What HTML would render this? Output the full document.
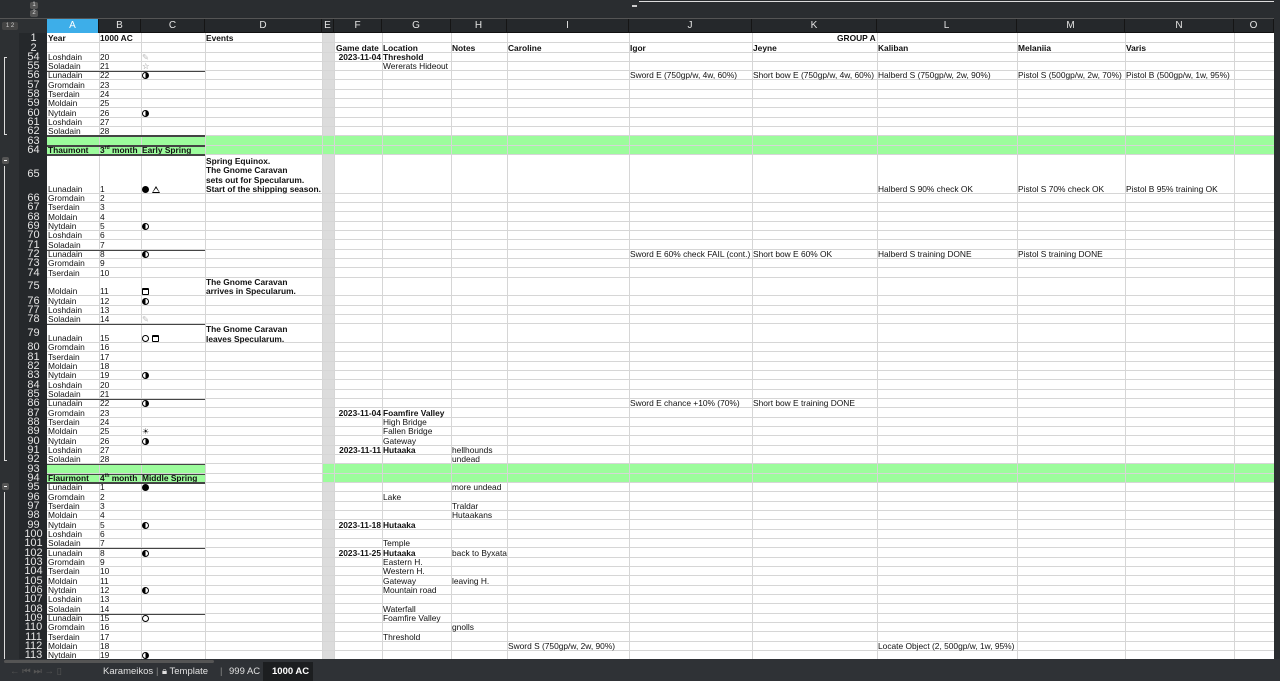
<!DOCTYPE html>
<html><head><meta charset="utf-8"><style>
*{margin:0;padding:0;box-sizing:border-box}
body{width:1280px;height:681px;overflow:hidden;background:#2b2e31;font-family:"Liberation Sans","DejaVu Sans",sans-serif;position:relative}
#top{position:absolute;left:0;top:0;width:1280px;height:19px;background:#2a2d30;border-bottom:1px solid #555}
#ch{position:absolute;left:47px;top:19px;width:1227px;height:14px;background:#25282b;border-bottom:1px solid #111}
#ch div{position:absolute;top:0;height:14px;color:#e4e4e4;font-size:10px;line-height:14px;text-align:center;border-right:1px solid #151515}
#sheet{position:absolute;left:47px;top:33px;width:1227px;height:626px;background:#fff;overflow:hidden}
#E{position:absolute;left:275px;top:0;width:12px;height:626px;background:#dcdcdc}
#rows{position:absolute;left:0;top:33px;width:1274px}
.r{position:relative;height:9.33px}
.r::after{content:"";position:absolute;left:47px;right:0;bottom:0;height:1px;background:#d6d6d6}
.r .n{position:absolute;left:20px;width:27px;bottom:-1px;text-align:center;color:#e6e6e6;font-size:11px;line-height:11px;z-index:3;font-weight:normal}
.r span{position:absolute;bottom:0;font-size:8.4px;line-height:9px;white-space:nowrap;color:#111;z-index:2}
.b{font-weight:bold}
.g{background:linear-gradient(#9cfc9c,#9cfc9c) no-repeat 47px 0/1227px 100%}
.g2{background:linear-gradient(#9cfc9c,#9cfc9c) no-repeat 47px 0/158px 100%,linear-gradient(#9cfc9c,#9cfc9c) no-repeat 322px 0/952px 100%}
.A{left:48px}.B{left:100px}.C{left:142px}.D{left:206px}.F{left:334px;width:47px;text-align:right;font-weight:bold}.G{left:383px}.H{left:452px}.I{left:508px}.J{left:630px}.K{left:753px}.L{left:878px}.M{left:1018px}.N{left:1126px}
.tl{position:absolute;bottom:-1px;height:2px;background:#444;z-index:2}
.vl{position:absolute;top:33px;width:1px;height:626px;background:#d6d6d6;z-index:1}
#left{position:absolute;left:0;top:19px;width:47px;height:640px;background:#2d3033}
#rh{position:absolute;left:19px;top:33px;width:28px;height:626px;background:#25282b}
#tabs{position:absolute;left:0;top:659px;width:1280px;height:22px;background:#2f3236;color:#e0e0e0;font-size:9.5px}
#tabs span{position:absolute;top:7px}
i.m{display:inline-block;width:7px;height:7px;border-radius:50%;border:1px solid #000;vertical-align:-1px;margin-right:3px}
.fr{background:linear-gradient(to right,#fff 50%,#000 50%)}
.fl{background:linear-gradient(to right,#000 50%,#fff 50%)}
.ff{background:#000}
.fo{background:#fff}
i.cal{display:inline-block;width:7px;height:7px;border:1px solid #000;border-top-width:2px;border-radius:1px;vertical-align:-1px}
i.tri{display:inline-block;width:0;height:0;border-left:4px solid transparent;border-right:4px solid transparent;border-bottom:7px solid #000;position:relative;vertical-align:-1px}
i.tri::after{content:"";position:absolute;left:-3px;top:2px;border-left:3px solid transparent;border-right:3px solid transparent;border-bottom:4px solid #fff}
</style></head><body>
<div id="top">
<div style="position:absolute;left:30px;top:2px;width:8px;height:7px;border-radius:2px;background:#555;color:#ddd;font-size:6px;text-align:center;line-height:7px">1</div>
<div style="position:absolute;left:30px;top:10px;width:8px;height:7px;border-radius:2px;background:#555;color:#ddd;font-size:6px;text-align:center;line-height:7px">2</div>
<div style="position:absolute;left:632px;top:5px;width:5px;height:2px;background:#ccc"></div>
<div style="position:absolute;left:639px;top:1px;width:641px;height:1px;background:#ddd"></div>
</div>
<div id="left"></div>
<div style="position:absolute;left:2px;top:22px;width:16px;height:8px;background:#444;border-radius:2px;color:#ccc;font-size:6px;text-align:center;line-height:8px">1 2</div>
<div style="position:absolute;left:4px;top:57px;width:3px;height:78px;border:1px solid #ddd;border-right:none"></div>
<div style="position:absolute;left:2px;top:157px;width:7px;height:7px;background:#555;border-radius:2px"></div>
<div style="position:absolute;left:4px;top:160px;width:3px;height:1px;background:#fff"></div>
<div style="position:absolute;left:4px;top:166px;width:3px;height:295px;border-left:1px solid #ddd;border-bottom:1px solid #ddd"></div>
<div style="position:absolute;left:2px;top:483px;width:7px;height:7px;background:#555;border-radius:2px"></div>
<div style="position:absolute;left:4px;top:486px;width:3px;height:1px;background:#fff"></div>
<div style="position:absolute;left:4px;top:492px;width:1px;height:167px;background:#ddd"></div>
<div id="rh"></div>
<div id="ch">
<div style="left:0;width:52px;background:#3daee9;color:#fff">A</div>
<div style="left:52px;width:42px">B</div>
<div style="left:94px;width:64px">C</div>
<div style="left:158px;width:117px">D</div>
<div style="left:275px;width:12px">E</div>
<div style="left:287px;width:48px">F</div>
<div style="left:335px;width:69px">G</div>
<div style="left:404px;width:56px">H</div>
<div style="left:460px;width:122px">I</div>
<div style="left:582px;width:123px">J</div>
<div style="left:705px;width:125px">K</div>
<div style="left:830px;width:140px">L</div>
<div style="left:970px;width:108px">M</div>
<div style="left:1078px;width:109px">N</div>
<div style="left:1187px;width:40px">O</div>
</div>
<div id="sheet"><div id="E"></div></div>
<div class="vl" style="left:99px"></div><div class="vl" style="left:141px"></div><div class="vl" style="left:205px"></div><div class="vl" style="left:322px"></div><div class="vl" style="left:334px"></div><div class="vl" style="left:382px"></div><div class="vl" style="left:451px"></div><div class="vl" style="left:507px"></div><div class="vl" style="left:629px"></div><div class="vl" style="left:752px"></div><div class="vl" style="left:877px"></div><div class="vl" style="left:1017px"></div><div class="vl" style="left:1125px"></div><div class="vl" style="left:1234px"></div>
<div id="rows">
<div class="r" style="height:10px"><b class="n">1</b><span class="A b">Year</span><span class="B b">1000 AC</span><span class="D b">Events</span><span class="b" style="left:837px">GROUP A</span></div>
<div class="r" style="height:9.5px"><b class="n">2</b><span class="F" style="text-align:left;left:336px">Game date</span><span class="G b">Location</span><span class="H b">Notes</span><span class="I b">Caroline</span><span class="J b">Igor</span><span class="K b">Jeyne</span><span class="L b">Kaliban</span><span class="M b">Melaniia</span><span class="N b">Varis</span></div>
<div class="r"><b class="n">54</b><span class="A">Loshdain</span><span class="B">20</span><span class="C" style="color:#bbb">✎</span><span class="F">2023-11-04</span><span class="G b">Threshold</span></div>
<div class="r"><b class="n">55</b><span class="A">Soladain</span><span class="B">21</span><span class="C" style="color:#888">☆</span><span class="G">Wererats Hideout</span><i class="tl" style="left:47px;width:158px;height:1px"></i></div>
<div class="r"><b class="n">56</b><span class="A">Lunadain</span><span class="B">22</span><span class="C"><i class="m fr"></i></span><span class="J">Sword E (750gp/w, 4w, 60%)</span><span class="K">Short bow E (750gp/w, 4w, 60%)</span><span class="L">Halberd S (750gp/w, 2w, 90%)</span><span class="M">Pistol S (500gp/w, 2w, 70%)</span><span class="N">Pistol B (500gp/w, 1w, 95%)</span></div>
<div class="r"><b class="n">57</b><span class="A">Gromdain</span><span class="B">23</span></div>
<div class="r"><b class="n">58</b><span class="A">Tserdain</span><span class="B">24</span></div>
<div class="r"><b class="n">59</b><span class="A">Moldain</span><span class="B">25</span></div>
<div class="r"><b class="n">60</b><span class="A">Nytdain</span><span class="B">26</span><span class="C"><i class="m fr"></i></span></div>
<div class="r"><b class="n">61</b><span class="A">Loshdain</span><span class="B">27</span></div>
<div class="r"><b class="n">62</b><span class="A">Soladain</span><span class="B">28</span><i class="tl" style="left:47px;width:158px"></i></div>
<div class="r g"><b class="n">63</b><i class="tl" style="left:47px;width:158px"></i></div>
<div class="r g"><b class="n">64</b><span class="A b">Thaumont</span><span class="B b">3<sup style="font-size:5px">rd</sup> month</span><span class="C b">Early Spring</span><i class="tl" style="left:47px;width:158px"></i></div>
<div class="r" style="height:38.7px"><b class="n" style="bottom:14px">65</b><span class="A">Lunadain</span><span class="B">1</span><span class="C"><i class="m ff"></i><i class="tri"></i></span><span class="D b" style="bottom:auto;top:2px;line-height:9.3px">Spring Equinox.<br>The Gnome Caravan<br>sets out for Specularum.<br>Start of the shipping season.</span><span class="L">Halberd S 90% check OK</span><span class="M">Pistol S 70% check OK</span><span class="N">Pistol B 95% training OK</span></div>
<div class="r"><b class="n">66</b><span class="A">Gromdain</span><span class="B">2</span></div>
<div class="r"><b class="n">67</b><span class="A">Tserdain</span><span class="B">3</span></div>
<div class="r"><b class="n">68</b><span class="A">Moldain</span><span class="B">4</span></div>
<div class="r"><b class="n">69</b><span class="A">Nytdain</span><span class="B">5</span><span class="C"><i class="m fl"></i></span></div>
<div class="r"><b class="n">70</b><span class="A">Loshdain</span><span class="B">6</span></div>
<div class="r"><b class="n">71</b><span class="A">Soladain</span><span class="B">7</span><i class="tl" style="left:47px;width:158px;height:1px"></i></div>
<div class="r"><b class="n">72</b><span class="A">Lunadain</span><span class="B">8</span><span class="C"><i class="m fl"></i></span><span class="J">Sword E 60% check FAIL (cont.)</span><span class="K">Short bow E 60% OK</span><span class="L">Halberd S training DONE</span><span class="M">Pistol S training DONE</span></div>
<div class="r"><b class="n">73</b><span class="A">Gromdain</span><span class="B">9</span></div>
<div class="r"><b class="n">74</b><span class="A">Tserdain</span><span class="B">10</span></div>
<div class="r" style="height:18.7px"><b class="n" style="bottom:4px">75</b><span class="A">Moldain</span><span class="B">11</span><span class="C"><i class="cal"></i></span><span class="D b" style="line-height:9.3px">The Gnome Caravan<br>arrives in Specularum.</span></div>
<div class="r"><b class="n">76</b><span class="A">Nytdain</span><span class="B">12</span><span class="C"><i class="m fl"></i></span></div>
<div class="r"><b class="n">77</b><span class="A">Loshdain</span><span class="B">13</span></div>
<div class="r"><b class="n">78</b><span class="A">Soladain</span><span class="B">14</span><span class="C" style="color:#bbb">✎</span><i class="tl" style="left:47px;width:158px;height:1px"></i></div>
<div class="r" style="height:18.7px"><b class="n" style="bottom:4px">79</b><span class="A">Lunadain</span><span class="B">15</span><span class="C"><i class="m fo"></i><i class="cal"></i></span><span class="D b" style="bottom:auto;top:1px;line-height:9.3px">The Gnome Caravan<br>leaves Specularum.</span></div>
<div class="r"><b class="n">80</b><span class="A">Gromdain</span><span class="B">16</span></div>
<div class="r"><b class="n">81</b><span class="A">Tserdain</span><span class="B">17</span></div>
<div class="r"><b class="n">82</b><span class="A">Moldain</span><span class="B">18</span></div>
<div class="r"><b class="n">83</b><span class="A">Nytdain</span><span class="B">19</span><span class="C"><i class="m fr"></i></span></div>
<div class="r"><b class="n">84</b><span class="A">Loshdain</span><span class="B">20</span></div>
<div class="r"><b class="n">85</b><span class="A">Soladain</span><span class="B">21</span><i class="tl" style="left:47px;width:158px;height:1px"></i></div>
<div class="r"><b class="n">86</b><span class="A">Lunadain</span><span class="B">22</span><span class="C"><i class="m fr"></i></span><span class="J">Sword E chance +10% (70%)</span><span class="K">Short bow E training DONE</span></div>
<div class="r"><b class="n">87</b><span class="A">Gromdain</span><span class="B">23</span><span class="F">2023-11-04</span><span class="G b">Foamfire Valley</span></div>
<div class="r"><b class="n">88</b><span class="A">Tserdain</span><span class="B">24</span><span class="G">High Bridge</span></div>
<div class="r"><b class="n">89</b><span class="A">Moldain</span><span class="B">25</span><span class="C" style="font-size:8px">☀</span><span class="G">Fallen Bridge</span></div>
<div class="r"><b class="n">90</b><span class="A">Nytdain</span><span class="B">26</span><span class="C"><i class="m fr"></i></span><span class="G">Gateway</span></div>
<div class="r"><b class="n">91</b><span class="A">Loshdain</span><span class="B">27</span><span class="F">2023-11-11</span><span class="G b">Hutaaka</span><span class="H">hellhounds</span></div>
<div class="r"><b class="n">92</b><span class="A">Soladain</span><span class="B">28</span><span class="H">undead</span><i class="tl" style="left:47px;width:158px;height:1px"></i></div>
<div class="r g2"><b class="n">93</b><i class="tl" style="left:47px;width:158px;height:1px"></i></div>
<div class="r g2"><b class="n">94</b><span class="A b">Flaurmont</span><span class="B b">4<sup style="font-size:5px">th</sup> month</span><span class="C b">Middle Spring</span><i class="tl" style="left:47px;width:158px"></i></div>
<div class="r"><b class="n">95</b><span class="A">Lunadain</span><span class="B">1</span><span class="C"><i class="m ff"></i></span><span class="H">more undead</span></div>
<div class="r"><b class="n">96</b><span class="A">Gromdain</span><span class="B">2</span><span class="G">Lake</span></div>
<div class="r"><b class="n">97</b><span class="A">Tserdain</span><span class="B">3</span><span class="H">Traldar</span></div>
<div class="r"><b class="n">98</b><span class="A">Moldain</span><span class="B">4</span><span class="H">Hutaakans</span></div>
<div class="r"><b class="n">99</b><span class="A">Nytdain</span><span class="B">5</span><span class="C"><i class="m fl"></i></span><span class="F">2023-11-18</span><span class="G b">Hutaaka</span></div>
<div class="r"><b class="n">100</b><span class="A">Loshdain</span><span class="B">6</span></div>
<div class="r"><b class="n">101</b><span class="A">Soladain</span><span class="B">7</span><span class="G">Temple</span><i class="tl" style="left:47px;width:158px;height:1px"></i></div>
<div class="r"><b class="n">102</b><span class="A">Lunadain</span><span class="B">8</span><span class="C"><i class="m fl"></i></span><span class="F">2023-11-25</span><span class="G b">Hutaaka</span><span class="H">back to Byxata</span></div>
<div class="r"><b class="n">103</b><span class="A">Gromdain</span><span class="B">9</span><span class="G">Eastern H.</span></div>
<div class="r"><b class="n">104</b><span class="A">Tserdain</span><span class="B">10</span><span class="G">Western H.</span></div>
<div class="r"><b class="n">105</b><span class="A">Moldain</span><span class="B">11</span><span class="G">Gateway</span><span class="H">leaving H.</span></div>
<div class="r"><b class="n">106</b><span class="A">Nytdain</span><span class="B">12</span><span class="C"><i class="m fl"></i></span><span class="G">Mountain road</span></div>
<div class="r"><b class="n">107</b><span class="A">Loshdain</span><span class="B">13</span></div>
<div class="r"><b class="n">108</b><span class="A">Soladain</span><span class="B">14</span><span class="G">Waterfall</span><i class="tl" style="left:47px;width:158px;height:1px"></i></div>
<div class="r"><b class="n">109</b><span class="A">Lunadain</span><span class="B">15</span><span class="C"><i class="m fo"></i></span><span class="G">Foamfire Valley</span></div>
<div class="r"><b class="n">110</b><span class="A">Gromdain</span><span class="B">16</span><span class="H">gnolls</span></div>
<div class="r"><b class="n">111</b><span class="A">Tserdain</span><span class="B">17</span><span class="G">Threshold</span></div>
<div class="r"><b class="n">112</b><span class="A">Moldain</span><span class="B">18</span><span class="I">Sword S (750gp/w, 2w, 90%)</span><span class="L">Locate Object (2, 500gp/w, 1w, 95%)</span></div>
<div class="r"><b class="n">113</b><span class="A">Nytdain</span><span class="B">19</span><span class="C"><i class="m fr"></i></span></div>
</div>
<div style="position:absolute;left:1274px;top:0;width:6px;height:681px;background:#2a2d30"></div>
<div id="tabs">
<div style="position:absolute;left:4px;top:1px;width:210px;height:3px;background:#555;border-radius:2px"></div>
<span style="left:10px;color:#555">← ⏮ ⏭ → ▯</span>
<span style="left:103px">Karameikos</span>
<span style="left:156px;color:#888">|</span>
<span style="left:162px">🔒︎ Template</span>
<span style="left:220px;color:#888">|</span>
<span style="left:229px">999 AC</span>
<div style="position:absolute;left:263px;top:3px;width:50px;height:19px;background:#1c1e20"></div>
<span style="left:272px;font-weight:bold;color:#fff">1000 AC</span>
</div>
</body></html>
